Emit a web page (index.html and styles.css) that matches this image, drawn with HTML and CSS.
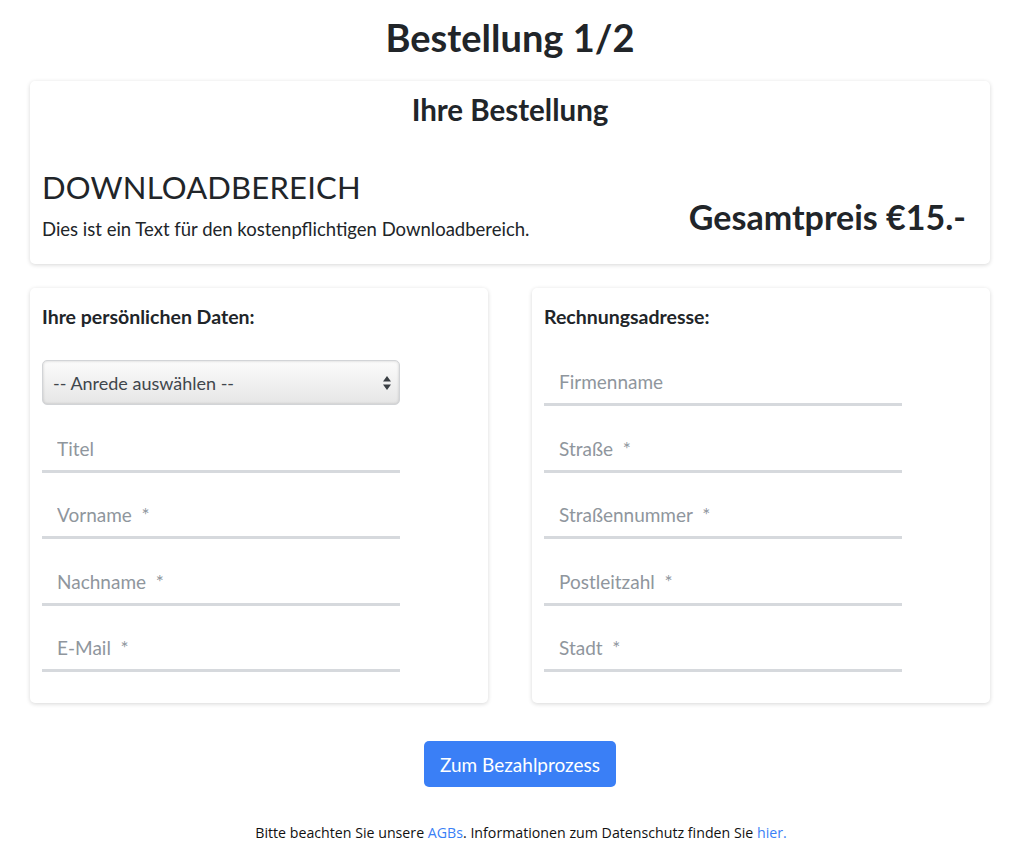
FILE: index.html
```html
<!DOCTYPE html>
<html lang="de">
<head>
<meta charset="utf-8">
<title>Bestellung 1/2</title>
<link rel="stylesheet" href="styles.css">
</head>
<body>
<main class="page">
  <h1 class="page-title">Bestellung 1/2</h1>

  <section class="card order">
    <h2 class="order-title">Ihre Bestellung</h2>
    <div class="order-row">
      <div class="order-info">
        <h3 class="product-name">DOWNLOADBEREICH</h3>
        <p class="product-desc">Dies ist ein Text für den kostenpflichtigen Downloadbereich.</p>
      </div>
      <div class="order-price">Gesamtpreis €15.-</div>
    </div>
  </section>

  <div class="forms">
    <section class="card form-card">
      <h4 class="form-title">Ihre persönlichen Daten:</h4>
      <div class="fields">
        <div class="select-wrap">
          <select class="select">
            <option>-- Anrede auswählen --</option>
          </select>
          <svg class="select-arrows" width="8" height="14" viewBox="0 0 8 14"><path d="M4 0 L8 5.5 H0 Z M0 8.5 H8 L4 14 Z" fill="#3a3f44"/></svg>
        </div>
        <input class="field" type="text" placeholder="Titel">
        <input class="field" type="text" placeholder="Vorname  *">
        <input class="field" type="text" placeholder="Nachname  *">
        <input class="field" type="text" placeholder="E-Mail  *">
      </div>
    </section>

    <section class="card form-card">
      <h4 class="form-title">Rechnungsadresse:</h4>
      <div class="fields">
        <input class="field" type="text" placeholder="Firmenname">
        <input class="field" type="text" placeholder="Straße  *">
        <input class="field" type="text" placeholder="Straßennummer  *">
        <input class="field" type="text" placeholder="Postleitzahl  *">
        <input class="field" type="text" placeholder="Stadt  *">
      </div>
    </section>
  </div>

  <div class="actions">
    <button class="btn-primary" type="button">Zum Bezahlprozess</button>
  </div>

  <p class="note">Bitte beachten Sie unsere <a href="#">AGBs</a>. Informationen zum Datenschutz finden Sie <a href="#">hier.</a></p>
</main>
</body>
</html>
```

FILE: styles.css
```css
* { box-sizing: border-box; }

html, body {
  margin: 0;
  padding: 0;
  background: #ffffff;
}

body {
  font-family: Lato, "Open Sans", "Liberation Sans", sans-serif;
  color: #212529;
}

.page {
  padding: 0 34px 0 30px;
}

.page-title {
  margin: 0;
  padding-top: 14px;
  height: 81px;
  text-align: center;
  font-size: 38px;
  font-weight: 700;
  line-height: 46px;
}

.card {
  background: #fff;
  border-radius: 5px;
  box-shadow: 0 1px 4px rgba(0, 0, 0, 0.16);
}

.order {
  height: 183px;
  padding: 12px 0 0 0;
}

.order-title {
  margin: 0;
  text-align: center;
  font-size: 29.5px;
  font-weight: 700;
  line-height: 34px;
}

.order-row {
  display: flex;
  align-items: center;
  justify-content: space-between;
  margin-top: 42px;
  padding: 0 24px 0 12px;
}

.product-name {
  margin: 0;
  font-size: 31px;
  font-weight: 400;
  line-height: 36px;
  letter-spacing: 0.2px;
}

.product-desc {
  margin: 12px 0 0;
  font-size: 18.5px;
  line-height: 24px;
}

.order-price {
  font-size: 34px;
  font-weight: 700;
  margin-top: 22px;
}

.forms {
  display: grid;
  grid-template-columns: 458px 458px;
  justify-content: space-between;
  margin-top: 24px;
}

.form-card {
  height: 415px;
  padding: 16px 12px 0 12px;
}

.form-title {
  margin: 0;
  font-size: 19.5px;
  font-weight: 700;
  line-height: 26px;
}

.fields {
  display: flex;
  flex-direction: column;
  gap: 20.5px;
  width: 358px;
  margin-top: 30px;
}

.select-wrap {
  position: relative;
  height: 45px;
  margin-bottom: 1px;
}

.select {
  appearance: none;
  -webkit-appearance: none;
  width: 100%;
  height: 45px;
  border: 1px solid #d2d4d7;
  border-radius: 5px;
  background: linear-gradient(#fbfbfb, #e6e6e6);
  box-shadow: inset 0 0 3px rgba(0, 0, 0, 0.18);
  font-family: inherit;
  font-size: 18px;
  color: #40464c;
  padding: 0 10px;
}

.select-arrows {
  position: absolute;
  right: 9px;
  top: 16px;
}

.field {
  display: block;
  width: 100%;
  height: 46px;
  border: none;
  border-bottom: 3px solid #d6d9dd;
  padding: 0 14px 0 15px;
  font-family: inherit;
  font-size: 19px;
  color: #212529;
  background: transparent;
  outline: none;
}

.field::placeholder {
  color: #8f969d;
}

.actions {
  display: flex;
  justify-content: center;
  margin-top: 38px;
  padding-left: 20px;
}

.btn-primary {
  height: 46px;
  padding: 0 16px;
  background: #3a7ff6;
  color: #fff;
  border: none;
  border-radius: 5px;
  font-family: inherit;
  font-size: 19px;
}

.note {
  margin: 36px 0 0;
  padding-left: 22px;
  text-align: center;
  font-family: "Open Sans", "Liberation Sans", sans-serif;
  font-size: 14.2px;
  color: #111;
}

.note a {
  color: #3a7ff6;
  text-decoration: none;
}
```
